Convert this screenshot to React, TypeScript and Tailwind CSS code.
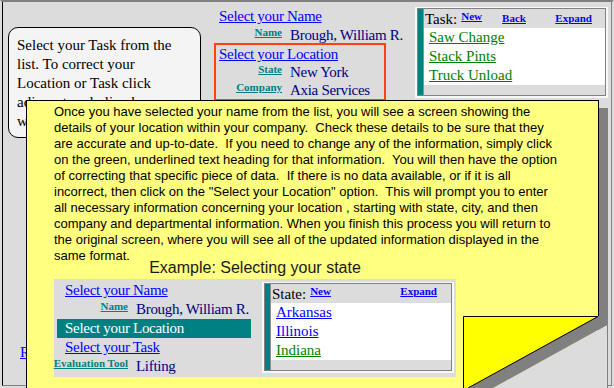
import React from 'react';

const SERIF = "font-['Liberation_Serif','Times_New_Roman',serif]";
const SANS = "font-['Liberation_Sans',Arial,sans-serif]";

const helpLines = [
  'Once you have selected your name from the list, you will see a screen showing the',
  'details of your location within your company.  Check these details to be sure that they',
  'are accurate and up-to-date.  If you need to change any of the information, simply click',
  'on the green, underlined text heading for that information.  You will then have the option',
  'of correcting that specific piece of data.  If there is no data available, or if it is all',
  'incorrect, then click on the "Select your Location" option.  This will prompt you to enter',
  'all necessary information concerning your location , starting with state, city, and then',
  'company and departmental information. When you finish this process you will return to',
  'the original screen, where you will see all of the updated information displayed in the',
  'same format.',
];

// small bold teal heading next to a value
const FieldLabel = ({ text, width }: { text: string; width: string }) => (
  <div className={`${width} shrink-0 flex justify-end`}>
    <a className="text-[11px] leading-[13px] font-bold underline text-[#008080] whitespace-nowrap">{text}</a>
  </div>
);

const Field = ({ label, value, labelWidth, rowClass }: { label: string; value: string; labelWidth: string; rowClass: string }) => (
  <div className={`flex items-start ${rowClass}`}>
    <FieldLabel text={label} width={labelWidth} />
    <span className="ml-[8px] text-[#000080] whitespace-nowrap tracking-[-0.3px]">{value}</span>
  </div>
);

interface PickListProps {
  title: string;
  showBack?: boolean;
  items: { text: string; color: string }[];
  width: string;
  expandPad: string;
}

const PickList: React.FC<PickListProps> = ({ title, showBack, items, width, expandPad }) => (
  <div className={`${width} border-t border-l-2 border-r-2 border-b-2 border-[#f8f8f8]`}>
    <div className="border border-[#808080] flex">
      <div className="w-[5px] bg-[#008080] shrink-0" />
      <div className="w-[1px] bg-[#909090] shrink-0" />
      <div className="flex-1 flex flex-col">
        <div className={`h-[19px] bg-[#dcdcdc] flex items-start pl-[1px] ${expandPad}`}>
          <span className="text-[15px] leading-[20px] text-black">{title}</span>
          <a className="ml-[4px] mt-[1px] text-[11px] leading-[13px] font-bold underline text-[#0000ff]">New</a>
          {showBack && (
            <a className="ml-[20px] mt-[3px] text-[11px] leading-[13px] font-bold underline text-[#0000ff]">Back</a>
          )}
          <a className={`ml-auto ${showBack ? 'mt-[3px]' : 'mt-[1px]'} text-[11px] leading-[13px] font-bold underline text-[#0000ff]`}>Expand</a>
        </div>
        <div className="bg-white">
          {items.map((it) => (
            <div key={it.text} className="h-[19px] leading-[19px] pl-[5px]">
              <a className={`underline text-[15px] ${it.color}`}>{it.text}</a>
            </div>
          ))}
        </div>
        <div className="h-[10px] bg-[#dcdcdc]" />
      </div>
    </div>
  </div>
);

const FoldedCorner = () => (
  <svg className="absolute left-[455px] top-[310px]" width="153" height="78" viewBox="0 0 153 78">
    <polygon points="152,15 152,78 38,78" fill="#dcdcdc" />
    <polygon points="143,6 153,6 152,15 38,78 13,78" fill="#808080" />
    <polygon points="8,6 143,6 13,78 8,78" fill="#ffff00" />
    <polyline points="8.5,78 8.5,6.5 143,6.5 13,78" fill="none" stroke="#000" strokeWidth="1" />
  </svg>
);

export default function App() {
  return (
    <div className={`relative w-[614px] h-[388px] overflow-hidden bg-[#dcdcdc] ${SERIF}`}>
      {/* sunken window frame */}
      <div className="w-full h-full border-t-2 border-t-[#808080] border-l-2 border-l-[#dcdcdc] border-r-2 border-r-[#dcdcdc] border-b-2 border-b-[#dcdcdc]">
        <div className="w-full h-full border-l border-l-black border-r border-r-[#808080] border-b border-b-[#808080] flex items-start text-[15px]">
          {/* left: hint box */}
          <div className="ml-[5px] mt-[25px] flex flex-col">
            <div className="w-[193px] h-[111px] bg-[#f4f4f4] border border-black rounded-[10px] pl-[8px] pt-[8px] leading-[19px] text-black">
              Select your Task from the
              <br />
              list. To correct your
              <br />
              Location or Task click
              <br />
              adjacent underlined
              <br />
              with the mouse.
            </div>
            <div className="mt-[205px] pl-[12px] leading-[19px]">
              <a className="underline text-[#0000ff]">Return to Menu</a>
            </div>
          </div>

          {/* middle: name and location */}
          <div className="ml-[13px] mt-[5px] w-[172px] flex flex-col">
            <div className="h-[19px] leading-[19px] pl-[5px]">
              <a className="underline text-[#0000ff] tracking-[-0.3px]">Select your Name</a>
            </div>
            <Field label="Name" value="Brough, William R." labelWidth="w-[68px]" rowClass="h-[19px] leading-[19px]" />
            <div className="-mt-[2px] border-2 border-[#ff4010] pl-[3px]">
              <div className="h-[18px] leading-[18px]">
                <a className="underline text-[#0000ff] tracking-[-0.3px]">Select your Location</a>
              </div>
              <Field label="State" value="New York" labelWidth="w-[63px]" rowClass="h-[18px] leading-[19px]" />
              <Field label="Company" value="Axia Services" labelWidth="w-[63px]" rowClass="h-[18px] leading-[19px]" />
            </div>
          </div>

          {/* right: task list */}
          <div className="ml-[29px] mt-[5px]">
            <PickList
              title="Task:"
              showBack
              width="w-[193px]"
              expandPad="pr-[13px]"
              items={[
                { text: 'Saw Change', color: 'text-[#008000]' },
                { text: 'Stack Pints', color: 'text-[#008000]' },
                { text: 'Truck Unload', color: 'text-[#008000]' },
              ]}
            />
          </div>
        </div>
      </div>

      {/* help popup */}
      <div className="absolute left-[26px] top-[100px] w-[573px] h-[300px] bg-[#ffff80] border border-black shadow-[9px_8px_0_#808080] pl-[27px] pt-[3px]">
        <div className={`${SANS} text-[13px] leading-[16px] text-black`}>
          {helpLines.map((l, i) => (
            <div key={i} className="whitespace-pre">{l}</div>
          ))}
        </div>
        <div className={`${SANS} w-[402px] -mt-[4px] text-center text-[16px] leading-[16px] text-[#1a1a1a]`}>
          Example: Selecting your state
        </div>
        <div className="mt-[3px] w-[402px] h-[98px] bg-[#dcdcdc] flex text-[15px]">
          <div className="w-[208px] pl-[3px] pt-[2px] flex flex-col">
            <div className="h-[19px] leading-[19px] pl-[8px]">
              <a className="underline text-[#0000ff] tracking-[-0.3px]">Select your Name</a>
            </div>
            <Field label="Name" value="Brough, William R." labelWidth="w-[71px]" rowClass="h-[19px] leading-[19px]" />
            <div className="w-[194px] h-[19px] leading-[19px] bg-[#008080] text-white pl-[8px] tracking-[-0.3px]">
              Select your Location
            </div>
            <div className="h-[19px] leading-[19px] pl-[8px]">
              <a className="underline text-[#0000ff] tracking-[-0.3px]">Select your Task</a>
            </div>
            <Field label="Evaluation Tool" value="Lifting" labelWidth="w-[71px]" rowClass="h-[19px] leading-[19px]" />
          </div>
          <div className="mt-[3px]">
            <PickList
              title="State:"
              width="w-[192px]"
              expandPad="pr-[14px]"
              items={[
                { text: 'Arkansas', color: 'text-[#0000ff]' },
                { text: 'Illinois', color: 'text-[#0000ff]' },
                { text: 'Indiana', color: 'text-[#008000]' },
              ]}
            />
          </div>
        </div>
      </div>

      <FoldedCorner />
    </div>
  );
}
